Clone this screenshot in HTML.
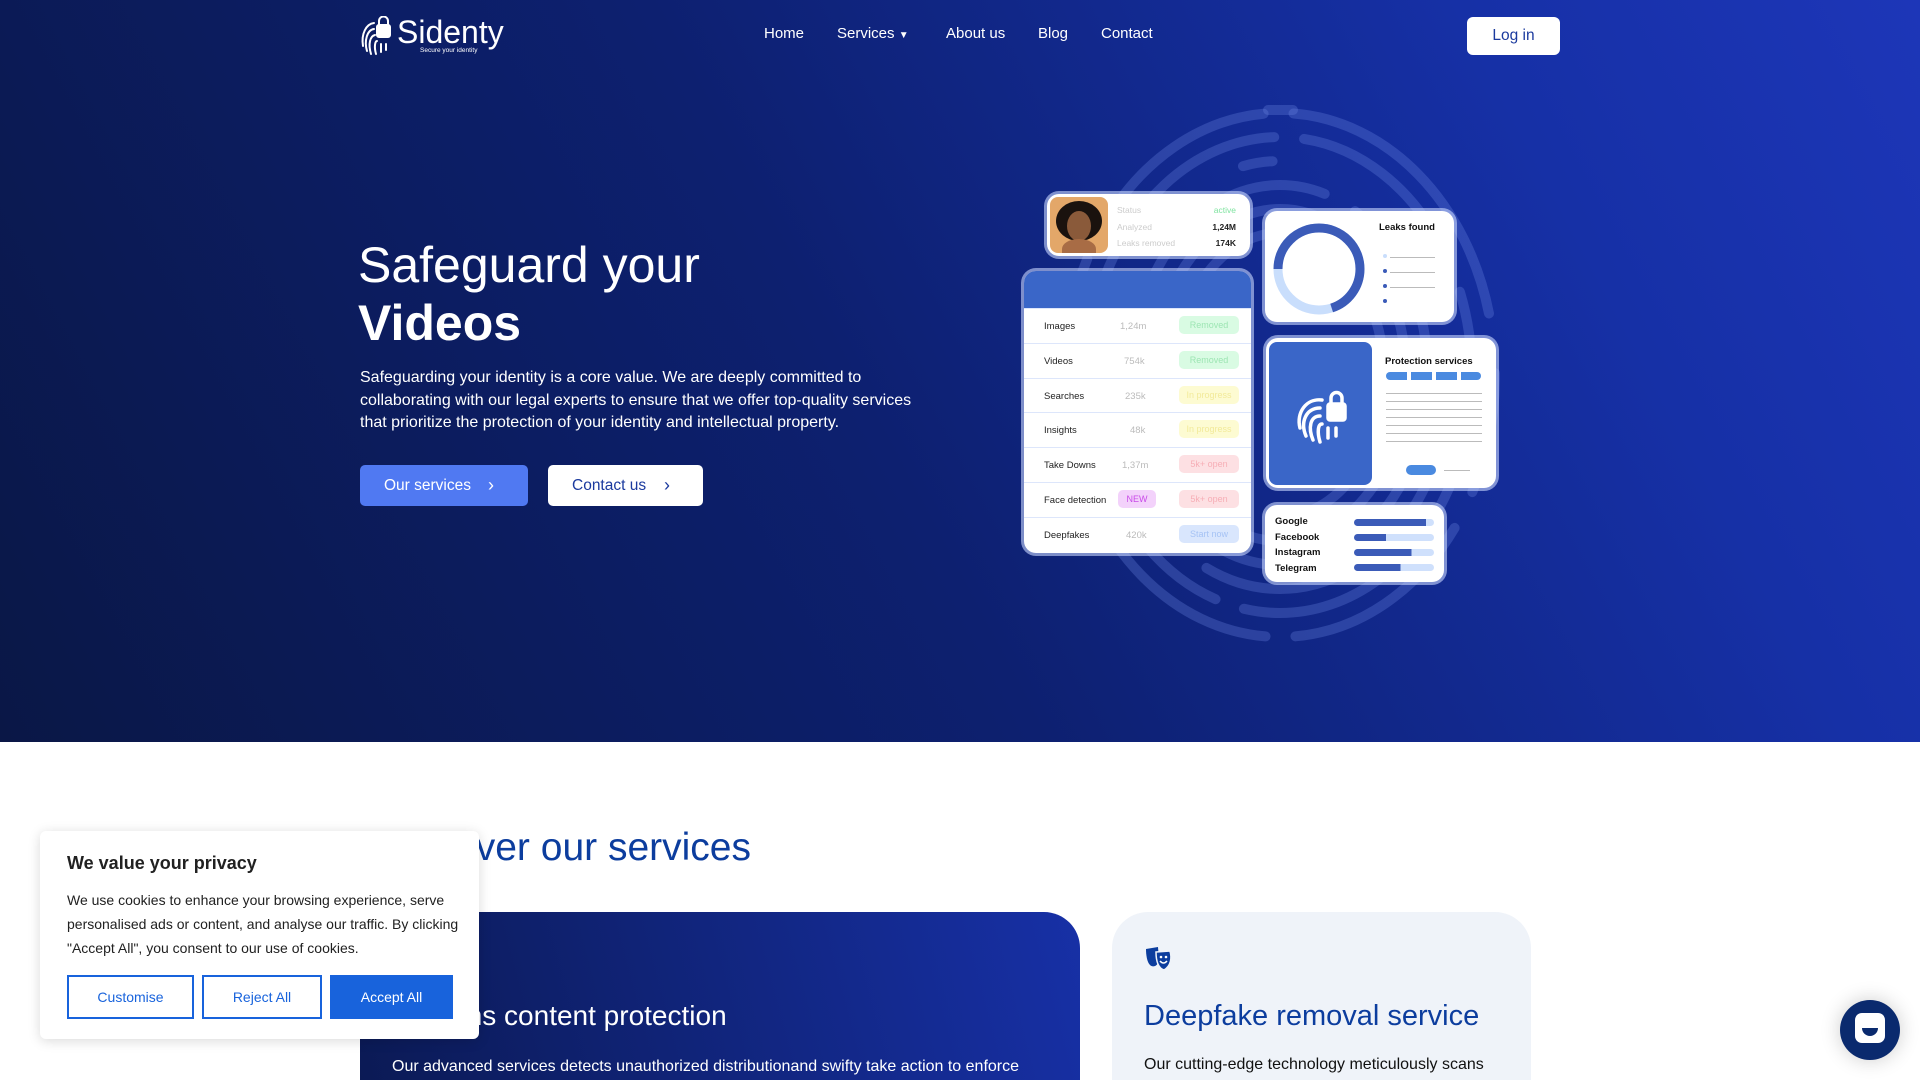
<!DOCTYPE html>
<html><head><meta charset="utf-8"><style>
*{margin:0;padding:0;box-sizing:border-box}
html{width:1920px;height:1080px;overflow:hidden}
body{width:1920px;height:1080px;overflow:hidden;font-family:"Liberation Sans",sans-serif;background:#fff;position:relative}
.hero{position:absolute;left:0;top:0;width:1920px;height:742px;background:linear-gradient(62deg,#0a1746 0%,#0d2070 45%,#1630a6 80%,#1d36b8 100%)}
.abs{position:absolute}
.nav a{position:absolute;top:25px;color:#fff;font-size:15px;text-decoration:none}
.card{position:absolute;background:#fff;border-radius:12px;box-shadow:0 0 0 3px rgba(200,215,255,.6)}
.row{position:absolute;left:0;width:227px;height:35px;border-top:1px solid #dde6fb;font-size:9.5px;color:#222}
.row span{position:absolute;top:12px}
.pill{position:absolute;left:155px;top:7px;width:60px;height:18px;border-radius:5px;font-size:9px;text-align:center;line-height:18px}
</style></head><body>
<div class="hero"></div>
<!-- fingerprint rings -->
<svg class="abs" style="left:1000px;top:90px" width="600" height="600" viewBox="0 0 600 600">
<g fill="none" stroke="rgba(110,135,230,0.3)" stroke-width="10" stroke-linecap="round">
<ellipse cx="280" cy="285" rx="215" ry="262" stroke-dasharray="120 40 200 30 300 60"/>
<ellipse cx="280" cy="285" rx="192" ry="238" stroke-dasharray="90 25 260 30 180 50"/>
<ellipse cx="280" cy="285" rx="170" ry="214" stroke-dasharray="200 30 150 40 250"/>
<ellipse cx="280" cy="285" rx="148" ry="190" stroke-dasharray="160 25 220 35"/>
<ellipse cx="280" cy="285" rx="126" ry="166" stroke-dasharray="300 40 150 30"/>
<ellipse cx="280" cy="285" rx="104" ry="142" stroke-dasharray="200 30"/>
<path d="M268 20 h25"/>
</g></svg>
<!-- profile card -->
<div class="card" style="left:1047px;top:194px;width:203px;height:62px">
<div class="abs" style="left:3px;top:3px;width:58px;height:56px;border-radius:8px;background:#e3a769;overflow:hidden">
<div class="abs" style="left:6px;top:4px;width:46px;height:40px;border-radius:50%;background:#1a120e"></div>
<div class="abs" style="left:17px;top:14px;width:24px;height:30px;border-radius:50%;background:#8a5a3a"></div>
<div class="abs" style="left:12px;top:42px;width:34px;height:20px;border-radius:50% 50% 0 0;background:#a86c45"></div>
</div>
<div class="abs" style="left:70px;top:8px;font-size:8.5px;color:#ccc;line-height:16.5px">Status<br>Analyzed<br>Leaks removed</div>
<div class="abs" style="right:14px;top:8px;font-size:8.5px;line-height:16.5px;text-align:right;color:#222;font-weight:bold"><span style="color:#7fe3a0;font-weight:normal">active</span><br>1,24M<br>174K</div>
</div>
<!-- table card -->
<div class="card" style="left:1024px;top:271px;width:227px;height:282px;overflow:hidden">
<div class="abs" style="left:0;top:0;width:227px;height:37px;background:#3a66c8"></div>
<div class="row" style="top:37px"><span style="left:20px">Images</span><span style="left:96px;color:#bbb">1,24m</span><div class="pill" style="background:#d9fbe3;color:#9de6b3">Removed</div></div>
<div class="row" style="top:72px"><span style="left:20px">Videos</span><span style="left:100px;color:#bbb">754k</span><div class="pill" style="background:#d9fbe3;color:#9de6b3">Removed</div></div>
<div class="row" style="top:107px"><span style="left:20px">Searches</span><span style="left:101px;color:#bbb">235k</span><div class="pill" style="background:#fdfbd2;color:#f2ea9a">In progress</div></div>
<div class="row" style="top:141px"><span style="left:20px">Insights</span><span style="left:106px;color:#bbb">48k</span><div class="pill" style="background:#fdfbd2;color:#f2ea9a">In progress</div></div>
<div class="row" style="top:176px"><span style="left:20px">Take Downs</span><span style="left:98px;color:#bbb">1,37m</span><div class="pill" style="background:#fde0e3;color:#f7aeb6">5k+ open</div></div>
<div class="row" style="top:211px"><span style="left:20px">Face detection</span><div class="abs" style="left:94px;top:7px;width:38px;height:18px;border-radius:5px;background:#f3d2fb;color:#c94be8;font-size:9px;text-align:center;line-height:18px">NEW</div><div class="pill" style="background:#fde0e3;color:#f7aeb6">5k+ open</div></div>
<div class="row" style="top:246px"><span style="left:20px">Deepfakes</span><span style="left:102px;color:#bbb">420k</span><div class="pill" style="background:#d9e6fd;color:#a6c3f5">Start now</div></div>
</div>
<!-- leaks card -->
<div class="card" style="left:1265px;top:211px;width:189px;height:111px">
<svg class="abs" style="left:6px;top:10px" width="96" height="96"><circle cx="48" cy="48" r="41" fill="none" stroke="#c9defc" stroke-width="9"/><circle cx="48" cy="48" r="41" fill="none" stroke="#3b5bb8" stroke-width="9" stroke-dasharray="180 300" transform="rotate(180 48 48)"/></svg>
<div class="abs" style="left:114px;top:11px;font-size:9.5px;color:#111;font-weight:bold">Leaks found</div>
<div class="abs" style="left:125px;top:40px;width:45px;height:42px;background:repeating-linear-gradient(#fff 0 6px,#bbb 6px 7px,#fff 7px 15px)"></div>
<div class="abs" style="left:118px;top:43px;width:4px;height:4px;border-radius:50%;background:#c9defc"></div>
<div class="abs" style="left:118px;top:58px;width:4px;height:4px;border-radius:50%;background:#3b5bb8"></div>
<div class="abs" style="left:118px;top:73px;width:4px;height:4px;border-radius:50%;background:#3b5bb8"></div>
<div class="abs" style="left:118px;top:88px;width:4px;height:4px;border-radius:50%;background:#3b5bb8"></div>
</div>
<!-- protection card -->
<div class="card" style="left:1266px;top:338px;width:230px;height:150px">
<div class="abs" style="left:3px;top:4px;width:103px;height:143px;border-radius:8px;background:#3a66c8"></div>
<svg class="abs" style="left:26px;top:50px" width="60" height="60" viewBox="0 0 60 60" fill="none" stroke="#fff" stroke-width="3.5" stroke-linecap="round"><path d="M8 40 C4 25 14 10 30 12"/><path d="M14 48 C8 34 14 20 28 20"/><path d="M21 52 C16 40 18 28 28 28"/><path d="M28 54 C25 44 26 36 30 36"/><path d="M36 50 V40"/><path d="M44 48 V40"/><rect x="36" y="16" width="17" height="16" rx="2" fill="#fff"/><path d="M39 16 V10 a5.5 5.5 0 0 1 11 0 V16"/></svg>
<div class="abs" style="left:119px;top:18px;font-size:9.5px;color:#111;font-weight:bold">Protection services</div>
<div class="abs" style="left:120px;top:34px;width:95px;height:8px;background:repeating-linear-gradient(90deg,#4a8ae0 0 21px,#fff 21px 25px);border-radius:4px"></div>
<div class="abs" style="left:120px;top:50px;width:96px;height:55px;background:repeating-linear-gradient(#fff 0 5px,#bbb 5px 6px,#fff 6px 8px)"></div>
<div class="abs" style="left:140px;top:127px;width:30px;height:10px;border-radius:5px;background:#4a8ae0"></div>
<div class="abs" style="left:178px;top:132px;width:26px;height:1px;background:#bbb"></div>
</div>
<!-- social card -->
<div class="card" style="left:1265px;top:505px;width:179px;height:77px">
<div class="abs" style="left:10px;top:9px;font-size:9.5px;color:#111;line-height:15.5px;font-weight:bold">Google<br>Facebook<br>Instagram<br>Telegram</div>
<div class="abs" style="left:89px;top:14px;width:80px;height:7px;border-radius:4px;background:linear-gradient(90deg,#3b5bb8 90%,#cfe0fc 90%)"></div>
<div class="abs" style="left:89px;top:29px;width:80px;height:7px;border-radius:4px;background:linear-gradient(90deg,#3b5bb8 40%,#cfe0fc 40%)"></div>
<div class="abs" style="left:89px;top:44px;width:80px;height:7px;border-radius:4px;background:linear-gradient(90deg,#3b5bb8 72%,#cfe0fc 72%)"></div>
<div class="abs" style="left:89px;top:59px;width:80px;height:7px;border-radius:4px;background:linear-gradient(90deg,#3b5bb8 58%,#cfe0fc 58%)"></div>
</div>

<!-- nav -->
<svg class="abs" style="left:360px;top:16px" width="34" height="40" viewBox="0 0 34 40" fill="none" stroke="#fff" stroke-width="2" stroke-linecap="round"><path d="M3 30 C1 18 6 8 14 7"/><path d="M7 35 C4 25 7 14 14 13"/><path d="M11 38 C8 28 10 20 15 19"/><path d="M16 38 C14 31 15 25 17 25"/><path d="M21 36 V28"/><path d="M26 34 V28"/><rect x="17" y="9" width="13" height="12" rx="2" fill="#fff"/><path d="M19 9 V5 a4.5 4.5 0 0 1 9 0 V9"/></svg>
<div class="abs" style="left:397px;top:14px;color:#fff;font-size:32px">Sidenty</div>
<div class="abs" style="left:420px;top:47px;color:#fff;font-size:6.5px">Secure your identity</div>
<div class="nav">
<a style="left:764px">Home</a>
<a style="left:837px">Services <span style="font-size:10px">&#9660;</span></a>
<a style="left:946px">About us</a>
<a style="left:1038px">Blog</a>
<a style="left:1101px">Contact</a>
</div>
<div class="abs" style="left:1467px;top:17px;width:93px;height:38px;background:#fff;border-radius:6px;color:#1b3a9e;font-size:15.5px;text-align:center;line-height:38px">Log in</div>

<!-- hero text -->
<div class="abs" style="left:358px;top:236px;color:#fff;font-size:50px;font-weight:300;line-height:58px">Safeguard your<br><b style="font-weight:bold">Videos</b></div>
<div class="abs" style="left:360px;top:367px;width:580px;color:#fff;font-size:16px;line-height:22.5px">Safeguarding your identity is a core value. We are deeply committed to collaborating with our legal experts to ensure that we offer top-quality services that prioritize the protection of your identity and intellectual property.</div>
<div class="abs" style="left:360px;top:465px;width:168px;height:41px;background:#5079f2;border-radius:5px;color:#fff;font-size:15.5px;line-height:41px;padding-left:24px">Our services <span style="position:absolute;left:128px;font-size:18px">&#x203A;</span></div>
<div class="abs" style="left:548px;top:465px;width:155px;height:41px;background:#fff;border-radius:5px;color:#1b3a9e;font-size:15.5px;line-height:41px;padding-left:24px">Contact us <span style="position:absolute;left:116px;font-size:18px">&#x203A;</span></div>

<!-- services -->
<div class="abs" style="right:1169px;top:826px;color:#0c3d9e;font-size:39px;white-space:nowrap">Discover our services</div>
<div class="abs" style="left:360px;top:912px;width:720px;height:168px;border-radius:36px 36px 0 0;background:linear-gradient(75deg,#0b1a55,#1730a6)">
<div class="abs" style="left:32px;top:88px;color:#fff;font-size:28px;white-space:nowrap">Patterns content protection</div>
<div class="abs" style="left:32px;top:146px;color:#fff;font-size:16px;white-space:nowrap">Our advanced services detects unauthorized distributionand swifty take action to enforce</div>
</div>
<div class="abs" style="left:1112px;top:912px;width:419px;height:168px;border-radius:36px 36px 0 0;background:#eff3f9">
<svg class="abs" style="left:32px;top:34px" width="30" height="26" viewBox="0 0 30 26" fill="#0c3d9e"><path d="M2 3 L14 1 L15 14 C14 20 9 22 6 19 C3 16 2 9 2 3Z"/><path d="M12 6 L26 5 C28 12 27 20 20 24 C14 22 12 15 12 6Z" stroke="#eff3f9" stroke-width="1.5"/><circle cx="17" cy="11" r="1.3" fill="#fff"/><circle cx="22" cy="11" r="1.3" fill="#fff"/><path d="M16 15 Q19.5 19 23 15" stroke="#fff" stroke-width="1.5" fill="none"/></svg>
<div class="abs" style="left:32px;top:88px;color:#0c3d9e;font-size:29px;white-space:nowrap">Deepfake removal service</div>
<div class="abs" style="left:32px;top:144px;color:#111;font-size:16px;white-space:nowrap">Our cutting-edge technology meticulously scans</div>
</div>

<!-- cookie -->
<div class="abs" style="left:40px;top:831px;width:439px;height:208px;background:#fff;border-radius:6px;box-shadow:0 2px 12px rgba(0,0,0,.15)">
<div class="abs" style="left:27px;top:22px;font-size:18px;font-weight:bold;color:#212121">We value your privacy</div>
<div class="abs" style="left:27px;top:57px;width:395px;font-size:14px;line-height:24px;color:#212121">We use cookies to enhance your browsing experience, serve personalised ads or content, and analyse our traffic. By clicking "Accept All", you consent to our use of cookies.</div>
<div class="abs" style="left:27px;top:144px;width:127px;height:44px;border:2px solid #1863dc;color:#1863dc;font-size:14px;text-align:center;line-height:40px">Customise</div>
<div class="abs" style="left:162px;top:144px;width:120px;height:44px;border:2px solid #1863dc;color:#1863dc;font-size:14px;text-align:center;line-height:40px">Reject All</div>
<div class="abs" style="left:290px;top:144px;width:123px;height:44px;background:#1863dc;color:#fff;font-size:14px;text-align:center;line-height:44px">Accept All</div>
</div>

<!-- chat -->
<div class="abs" style="left:1840px;top:1000px;width:60px;height:60px;border-radius:50%;background:#0a2a6e;box-shadow:0 0 20px rgba(0,0,0,.2)"></div>
<div class="abs" style="left:1855px;top:1013px;width:30px;height:30px;border-radius:7px;background:#fff"></div>
<div class="abs" style="left:1862px;top:1028px;width:16px;height:8px;border-radius:0 0 8px 8px;background:#0a2a6e"></div>
</body></html>
